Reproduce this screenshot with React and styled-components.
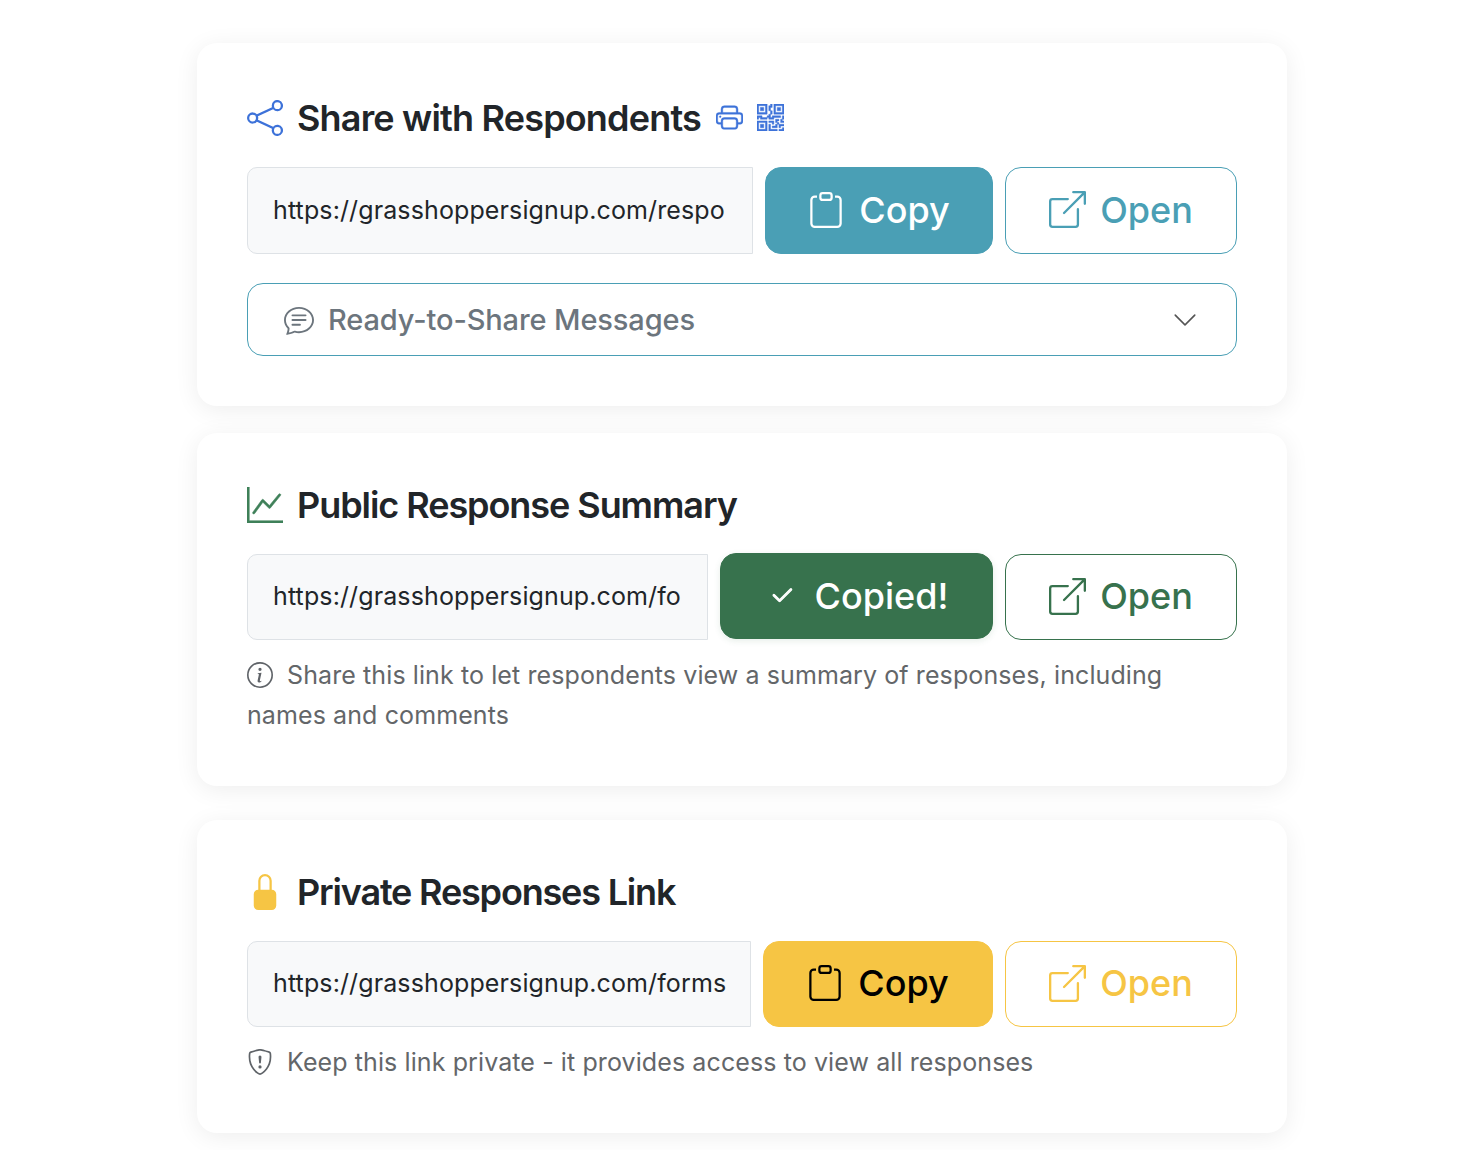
import React from "react";
import styled, { createGlobalStyle } from "styled-components";
import {
  BsShare, BsPrinter, BsQrCode, BsClipboard, BsBoxArrowUpRight, BsChatText,
  BsChevronDown, BsGraphUp, BsLockFill, BsInfoCircle, BsShieldExclamation, BsCheck2,
} from "react-icons/bs";

const Global = createGlobalStyle`
  html, body { margin: 0; padding: 0; background: #fff; }
  body { font-family: Inter, "Liberation Sans", sans-serif; color: #212529; }
`;

const Page = styled.main`
  width: 1090px;
  margin-left: 197px;
  padding-top: 43px;
  display: flex;
  flex-direction: column;
`;

const Card = styled.section`
  box-sizing: border-box;
  height: ${(p) => p.$h}px;
  margin-bottom: ${(p) => p.$mb}px;
  padding: ${(p) => p.$pt}px 50px 0;
  background: #fff;
  border-radius: 20px;
  box-shadow: 0 4px 24px rgba(0, 0, 0, 0.07);
`;

const Heading = styled.div`
  display: flex;
  align-items: center;
  height: 50px;
`;

const HeadIcon = styled.span`
  width: 36px;
  margin-right: 14px;
  display: flex;
  justify-content: center;
  color: ${(p) => p.$color};
  font-size: ${(p) => p.$size || 36}px;
`;

const Title = styled.h2`
  margin: 0;
  font: 600 36px/50px Inter, sans-serif;
  letter-spacing: ${(p) => p.$ls}px;
  color: #212529;
`;

const ToolIcon = styled.span`
  display: flex;
  margin-left: ${(p) => p.$ml}px;
  margin-top: -2px;
  color: #3d72d9;
  font-size: 27px;
`;

const Row = styled.div`
  display: flex;
  gap: 12px;
  margin-top: 24px;
  height: ${(p) => p.$h}px;
`;

const UrlBox = styled.div`
  flex: 1;
  min-width: 0;
  box-sizing: border-box;
  display: flex;
  align-items: center;
  padding: 0 20px 2px 25px;
  overflow: hidden;
  white-space: nowrap;
  background: #f8f9fa;
  border: 1px solid #dee2e6;
  border-radius: 10px 0 0 10px;
  font-size: 25px;
  letter-spacing: 0.12px;
  color: #212529;
`;

const Button = styled.div`
  box-sizing: border-box;
  width: ${(p) => p.$w}px;
  flex: none;
  display: flex;
  align-items: center;
  justify-content: center;
  gap: ${(p) => p.$gap || 15}px;
  padding-bottom: 2px;
  border-radius: 16px;
  font-size: 36px;
  font-weight: 500;
  background: ${(p) => (p.$fill ? p.$color : "#fff")};
  border: 1px solid ${(p) => p.$color};
  color: ${(p) => (p.$fill ? p.$text : p.$color)};
`;

const CopiedButton = styled(Button)`
  padding-left: 4px;
  padding-bottom: 0;
  transform: translateY(-1px);
  box-shadow: 0 2px 6px rgba(55, 114, 77, 0.12);
  svg { stroke: currentColor; stroke-width: 0.7; }
`;

const Select = styled.div`
  box-sizing: border-box;
  height: 73px;
  margin-top: 29px;
  padding: 0 38px 0 36px;
  display: flex;
  align-items: center;
  border: 1px solid #4a9fb5;
  border-radius: 16px;
  color: #6c757d;
  font-size: 29px;
  font-weight: 500;
  letter-spacing: -0.12px;
`;

const SelectLabel = styled.span`
  flex: 1;
  margin-left: 14px;
`;

const Note = styled.p`
  margin: 15px 0 0;
  font-size: 25px;
  line-height: 40px;
  letter-spacing: 0.1px;
  color: #636669;
  svg { vertical-align: -4px; margin-right: 14px; color: #5f6368; }
`;

const OpenBtn = ({ color }) => (
  <Button $w={232} $color={color} $gap={14}>
    <BsBoxArrowUpRight size={37} />
    Open
  </Button>
);

export default function App() {
  return (
    <>
      <Global />
      <Page>
        <Card $h={363} $mb={27} $pt={50}>
          <Heading>
            <HeadIcon $color="#3d72d9"><BsShare /></HeadIcon>
            <Title $ls={-0.82}>Share with Respondents</Title>
            <ToolIcon $ml={15}><BsPrinter stroke="currentColor" strokeWidth={0.25} /></ToolIcon>
            <ToolIcon $ml={14}><BsQrCode stroke="currentColor" strokeWidth={0.25} /></ToolIcon>
          </Heading>
          <Row $h={87}>
            <UrlBox>https://grasshoppersignup.com/respo</UrlBox>
            <Button $w={228} $fill $color="#4a9fb5" $text="#fff"><BsClipboard size={36} />Copy</Button>
            <OpenBtn color="#4a9fb5" />
          </Row>
          <Select>
            <BsChatText size={30} />
            <SelectLabel>Ready-to-Share Messages</SelectLabel>
            <BsChevronDown size={26} color="#555" />
          </Select>
        </Card>
        <Card $h={353} $mb={34} $pt={47}>
          <Heading>
            <HeadIcon $color="#3f8059"><BsGraphUp stroke="currentColor" strokeWidth={0.25} /></HeadIcon>
            <Title $ls={-1.06}>Public Response Summary</Title>
          </Heading>
          <Row $h={86}>
            <UrlBox>https://grasshoppersignup.com/fo</UrlBox>
            <CopiedButton $w={273} $fill $color="#37724d" $text="#fff" $gap={20}><BsCheck2 size={26} />Copied!</CopiedButton>
            <OpenBtn color="#37724d" />
          </Row>
          <Note>
            <BsInfoCircle size={26} />
            Share this link to let respondents view a summary of responses, including names and comments
          </Note>
        </Card>
        <Card $h={313} $mb={17} $pt={47}>
          <Heading>
            <HeadIcon $color="#f6c544"><BsLockFill /></HeadIcon>
            <Title $ls={-1.18}>Private Responses Link</Title>
          </Heading>
          <Row $h={86}>
            <UrlBox>https://grasshoppersignup.com/forms</UrlBox>
            <Button $w={230} $fill $color="#f6c544" $text="#000"><BsClipboard size={36} />Copy</Button>
            <OpenBtn color="#f6c544" />
          </Row>
          <Note>
            <BsShieldExclamation size={26} />
            Keep this link private - it provides access to view all responses
          </Note>
        </Card>
      </Page>
    </>
  );
}
